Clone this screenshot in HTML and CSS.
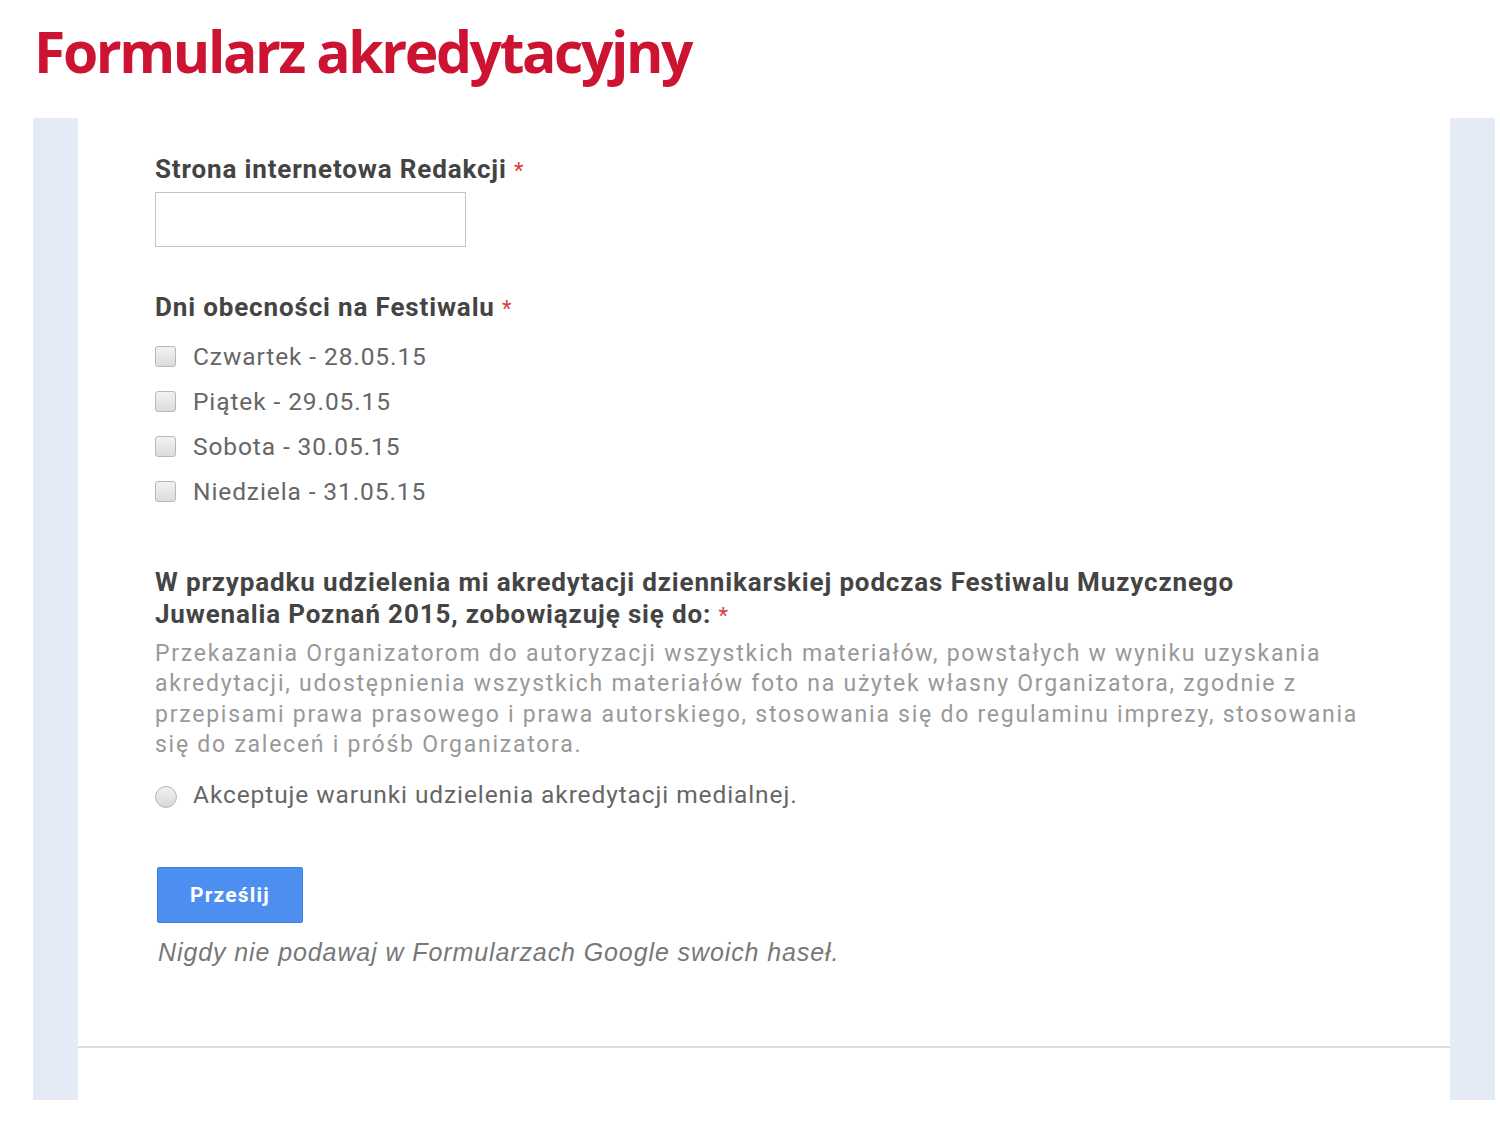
FILE: index.html
```html
<!DOCTYPE html>
<html lang="pl">
<head>
<meta charset="utf-8">
<title>Formularz akredytacyjny</title>
<link rel="stylesheet" href="styles.css">
</head>
<body>
<h1 class="title">Formularz akredytacyjny</h1>
<div class="frame">
  <div class="side"></div>
  <div class="sheet">
    <div class="content">
      <div class="item item-text">
        <div class="label">Strona internetowa Redakcji <span class="req">*</span></div>
        <div class="input"></div>
      </div>
      <div class="item item-check">
        <div class="label">Dni obecności na Festiwalu <span class="req">*</span></div>
        <div class="options">
          <div class="opt"><span class="box"></span><span class="opt-text">Czwartek - 28.05.15</span></div>
          <div class="opt"><span class="box"></span><span class="opt-text">Piątek - 29.05.15</span></div>
          <div class="opt"><span class="box"></span><span class="opt-text">Sobota - 30.05.15</span></div>
          <div class="opt"><span class="box"></span><span class="opt-text">Niedziela - 31.05.15</span></div>
        </div>
      </div>
      <div class="item item-radio">
        <div class="label long">W przypadku udzielenia mi akredytacji dziennikarskiej podczas Festiwalu Muzycznego Juwenalia Poznań 2015, zobowiązuję się do: <span class="req">*</span></div>
        <div class="desc">Przekazania Organizatorom do autoryzacji wszystkich materiałów, powstałych w wyniku uzyskania akredytacji, udostępnienia wszystkich materiałów foto na użytek własny Organizatora, zgodnie z przepisami prawa prasowego i prawa autorskiego, stosowania się do regulaminu imprezy, stosowania się do zaleceń i próśb Organizatora.</div>
        <div class="opt radio-opt"><span class="radio"></span><span class="opt-text">Akceptuje warunki udzielenia akredytacji medialnej.</span></div>
      </div>
      <div class="submit-row">
        <div class="button">Prześlij</div>
      </div>
      <div class="note">Nigdy nie podawaj w Formularzach Google swoich haseł.</div>
    </div>
    <div class="divider"></div>
  </div>
  <div class="side"></div>
</div>
</body>
</html>
```
FILE: styles.css
```css
html, body {
  margin: 0;
  padding: 0;
  background: #ffffff;
}
body {
  width: 1500px;
  height: 1131px;
  overflow: hidden;
  font-family: Roboto, "Liberation Sans", Arial, sans-serif;
}
.title {
  margin: 0;
  padding: 19px 0 0 34px;
  height: 96px;
  box-sizing: border-box;
  font-family: "Open Sans", "Liberation Sans", sans-serif;
  font-weight: 700;
  font-size: 57px;
  line-height: 64px;
  letter-spacing: -2.4px;
  color: #cc1432;
}
.frame {
  display: flex;
  margin: 22px 0 0 33px;
  width: 1462px;
  height: 982px;
}
.side {
  width: 45px;
  background: #e4eaf6;
  flex: none;
}
.sheet {
  flex: 1;
  background: #ffffff;
  display: flex;
  flex-direction: column;
}
.content {
  padding: 35px 0 0 77px;
  height: 928px;
  box-sizing: border-box;
}
.divider {
  height: 2px;
  background: #dcdcdc;
}
.label {
  font-weight: 700;
  font-size: 26px;
  line-height: 32px;
  color: #444444;
  letter-spacing: 0.85px;
}
.req {
  color: #d84040;
  font-weight: 400;
  font-size: 22px;
  line-height: 1;
}
.input {
  margin-top: 7px;
  width: 311px;
  height: 55px;
  border: 1px solid #c4c4c4;
  box-sizing: border-box;
}
.item-check {
  margin-top: 44px;
}
.options {
  margin-top: 17px;
  display: flex;
  flex-direction: column;
  gap: 13px;
}
.opt {
  display: flex;
  align-items: center;
  height: 32px;
}
.box {
  width: 21px;
  height: 21px;
  border: 1px solid #b8b8b8;
  border-radius: 3px;
  background: linear-gradient(#f2f2f2, #dcdcdc);
  box-sizing: border-box;
  margin-right: 17px;
  flex: none;
}
.opt-text {
  font-size: 24.5px;
  color: #666666;
  letter-spacing: 0.9px;
}
.item-radio {
  margin-top: 59px;
}
.label.long {
  width: 1150px;
}
.desc {
  margin-top: 9px;
  font-size: 23px;
  line-height: 30.4px;
  color: #999999;
  width: 1225px;
  letter-spacing: 1.75px;
}
.radio-opt {
  margin-top: 18px;
}
.radio {
  width: 22px;
  height: 22px;
  border-radius: 50%;
  border: 1px solid #b8b8b8;
  background: linear-gradient(#f2f2f2, #d8d8d8);
  box-sizing: border-box;
  margin-right: 16px;
  margin-top: 4px;
  flex: none;
}
.submit-row {
  margin-top: 56px;
  padding-left: 2px;
}
.button {
  width: 146px;
  height: 56px;
  background: #4d8ff0;
  border: 1px solid #3f7fe0;
  box-sizing: border-box;
  border-radius: 2px;
  color: #ffffff;
  font-weight: 700;
  font-size: 21px;
  letter-spacing: 1.2px;
  display: flex;
  align-items: center;
  justify-content: center;
}
.note {
  margin-top: 15px;
  padding-left: 3px;
  font-family: "Liberation Sans", Arial, sans-serif;
  font-style: italic;
  font-size: 25px;
  color: #777777;
  letter-spacing: 0.9px;
}
```
